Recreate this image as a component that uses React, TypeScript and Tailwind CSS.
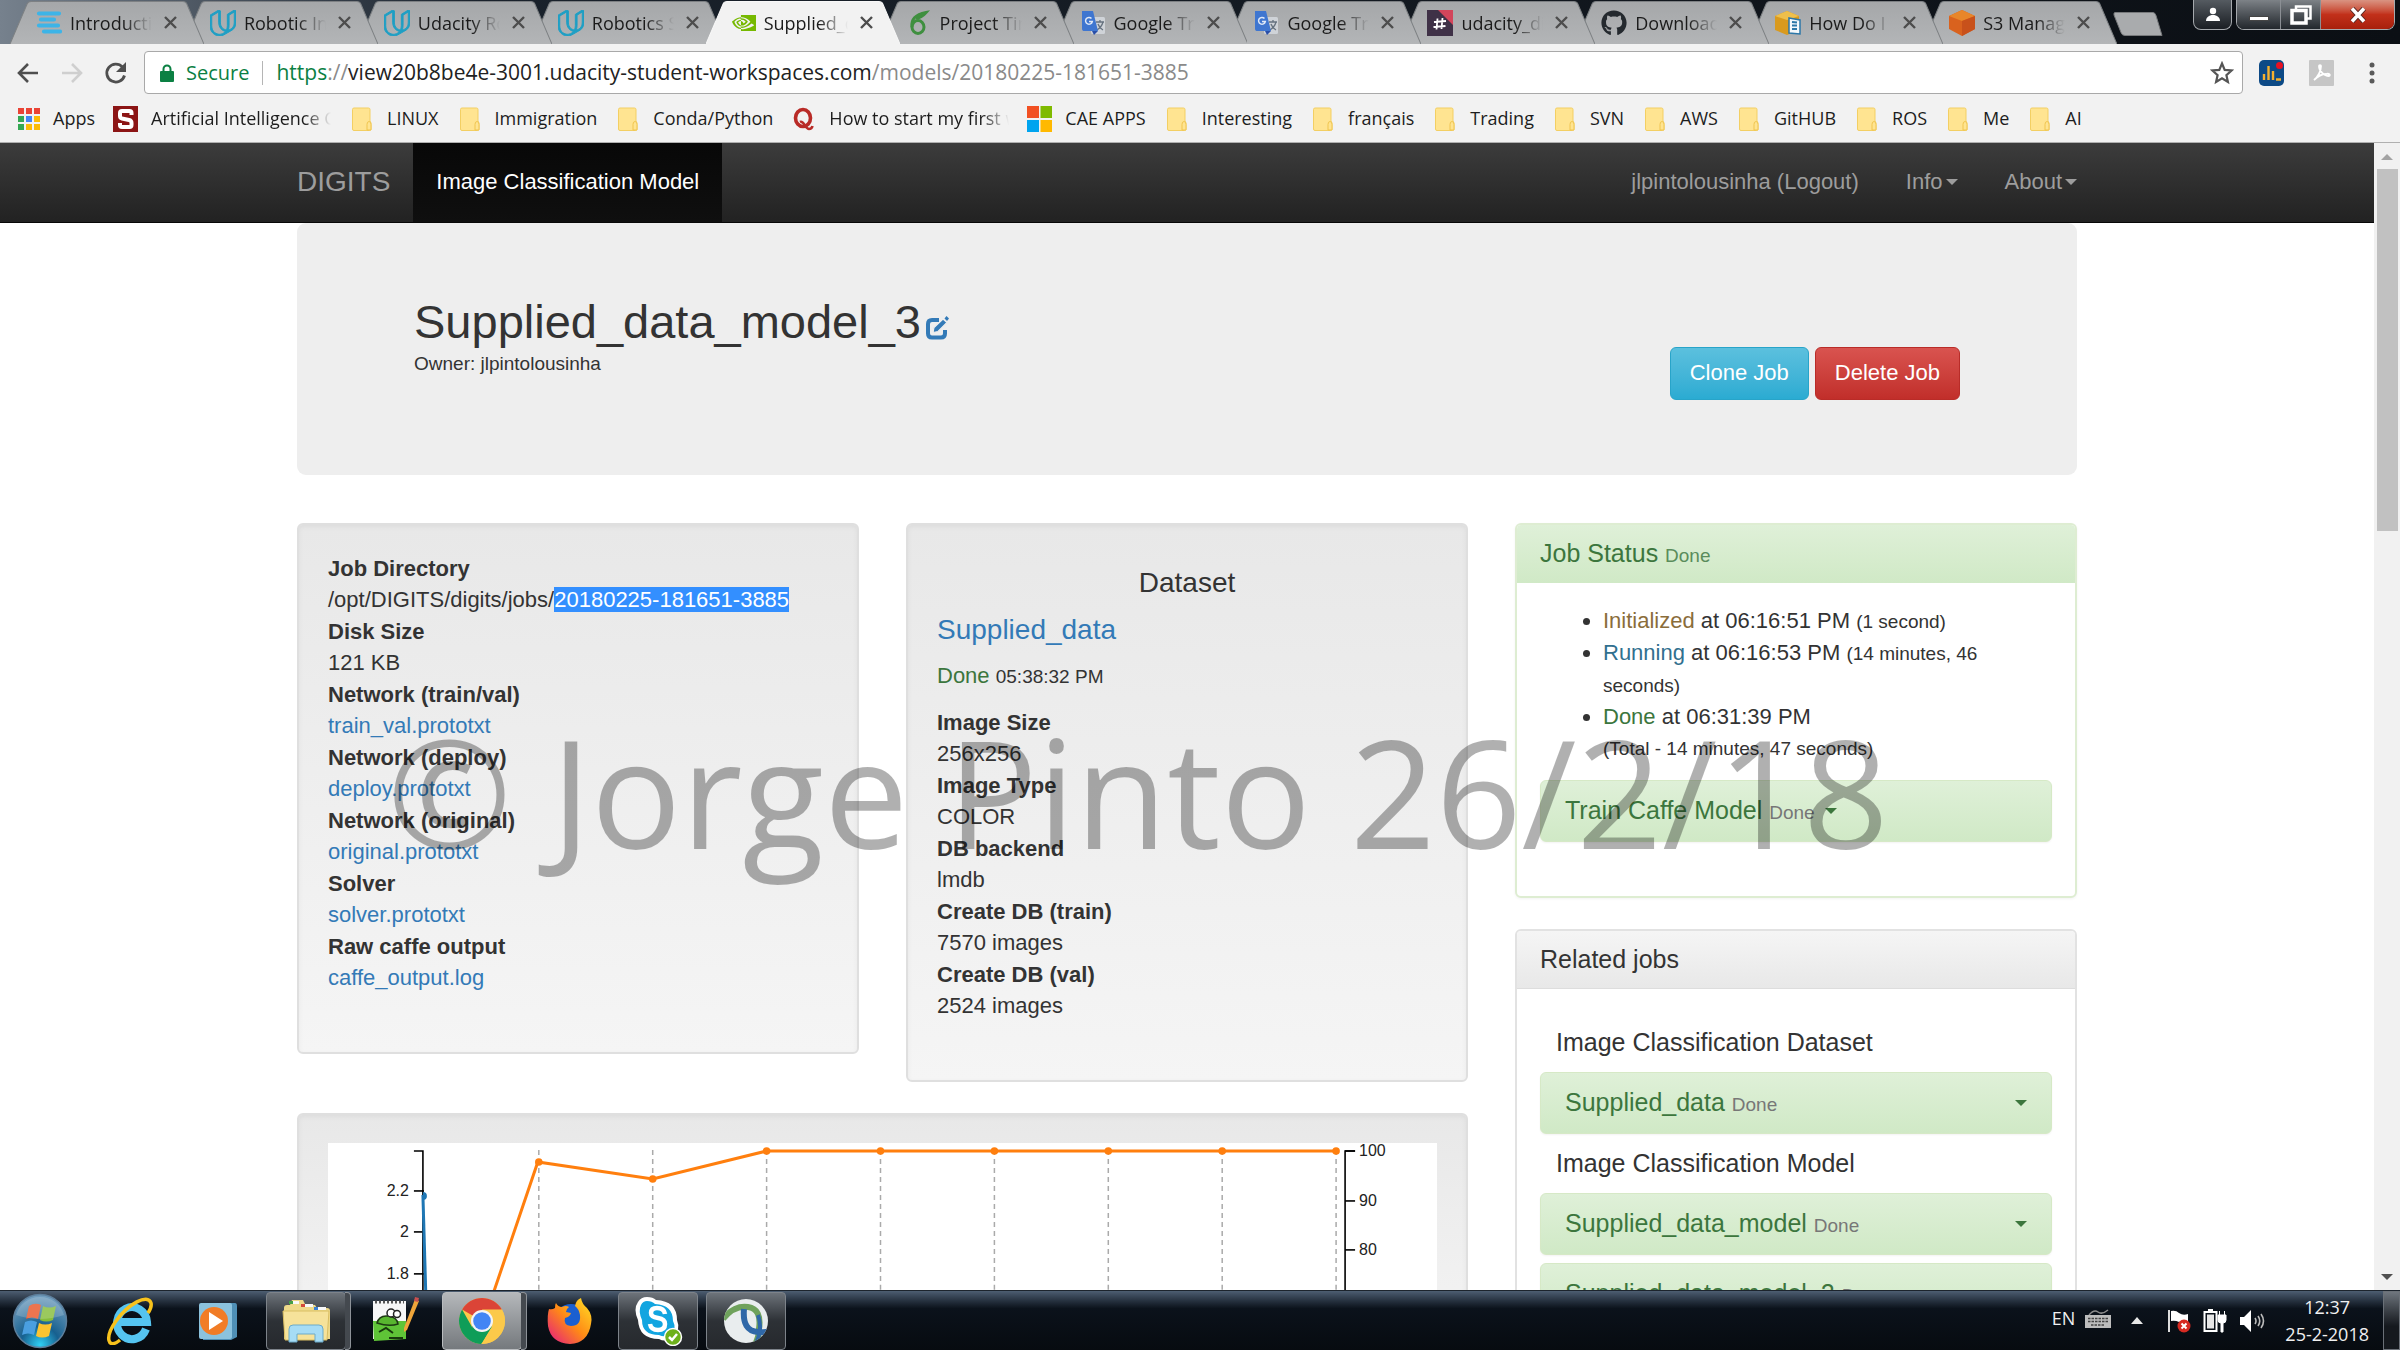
import React from "react";
import { SiUdacity, SiNvidia } from "react-icons/si";
import { FaGithub } from "react-icons/fa";

const UI = "font-['Open_Sans','Noto_Sans',sans-serif]";

function StripesIcon() {
  return (
    <svg viewBox="0 0 26 26" className="size-[26px] shrink-0" aria-hidden="true">
      <g stroke="#3db4e7" strokeWidth="4.200" strokeLinecap="round">
        <path d="M3 3.500h20M5 9.500h13M3 15.500h19M8 21.500h16" />
      </g>
    </svg>
  );
}
function OverleafIcon() {
  return (
    <svg viewBox="0 0 26 26" className="size-[26px] shrink-0" fill="none" stroke="#3f8f3f" aria-hidden="true">
      <ellipse cx="12" cy="17" rx="6" ry="6.5" strokeWidth="3" />
      <path d="M6 17C5 10 8 5 20 2.500C17 6 13 8 10 8" strokeWidth="3" />
    </svg>
  );
}
function TranslateIcon() {
  return (
    <svg viewBox="0 0 26 26" className="size-[26px] shrink-0" aria-hidden="true">
      <rect x="11" y="7" width="14" height="17" rx="1.500" fill="#cfd3d8" />
      <path d="M16 12h8M20 10v2M17 20c3-2 5-4 6-8M18 14c1 3 3 5 5 6" stroke="#66727f" strokeWidth="1.300" fill="none" />
      <path d="M2 1h11l5 20H3.500A2 2 0 0 1 2 19z" fill="#3f76d0" />
      <path d="M12 21h6l-4 4z" fill="#2a4fa8" />
      <path d="M11.500 8.500a3.400 3.400 0 1 0 .8 3H9" stroke="#dfe8f7" strokeWidth="1.500" fill="none" />
    </svg>
  );
}
function SlackIcon() {
  return (
    <svg viewBox="0 0 26 26" className="size-[26px] shrink-0" aria-hidden="true">
      <rect width="26" height="26" fill="#3f3147" />
      <path d="M11 0h15v15z" fill="#d3455b" />
      <path d="M10.500 8.500l-1 11M15.500 8l-1 11M7 12l12-1M6.500 17l12-1" stroke="#fff" strokeWidth="1.800" />
    </svg>
  );
}
function CubeDocIcon() {
  return (
    <svg viewBox="0 0 26 26" className="size-[26px] shrink-0" aria-hidden="true">
      <path d="M12 1l12 5v14l-12 5-12-5V6z" fill="#d99a1e" />
      <path d="M12 1l12 5-12 4L0 6z" fill="#eebf4c" />
      <path d="M14 8l11 2v14l-11-1z" fill="#f4f8fb" stroke="#2c77a8" strokeWidth="1.500" />
      <path d="M17 12l5 .5M17 15.500h5M17 19h5" stroke="#2c77a8" strokeWidth="1.800" />
    </svg>
  );
}
function CubeIcon() {
  return (
    <svg viewBox="0 0 26 26" className="size-[26px] shrink-0" aria-hidden="true">
      <path d="M13 0l13 6v13l-13 7-13-7V6z" fill="#d9621e" />
      <path d="M13 0l13 6-13 5L0 6z" fill="#e8862a" />
      <path d="M13 11l13-5v13l-13 7z" fill="#c8511b" />
    </svg>
  );
}

const udacity = <SiUdacity strokeWidth={0.9} className="size-[26px] shrink-0 text-[#1f9fc4]" aria-hidden="true" />;
const tabs: { title: string; icon: React.ReactNode; z: string; active?: boolean }[] = [
  { title: "Introduction", icon: <StripesIcon />, z: "z-[12]" },
  { title: "Robotic Inference", icon: udacity, z: "z-[11]" },
  { title: "Udacity Robotics", icon: udacity, z: "z-[10]" },
  { title: "Robotics Software", icon: udacity, z: "z-[9]" },
  { title: "Supplied_data", icon: <SiNvidia className="size-[24px] shrink-0 text-[#76b900]" aria-hidden="true" />, z: "z-[20]", active: true },
  { title: "Project Time", icon: <OverleafIcon />, z: "z-[8]" },
  { title: "Google Translate", icon: <TranslateIcon />, z: "z-[7]" },
  { title: "Google Translate", icon: <TranslateIcon />, z: "z-[6]" },
  { title: "udacity_discuss", icon: <SlackIcon />, z: "z-[5]" },
  { title: "Downloads", icon: <FaGithub className="size-[26px] shrink-0 text-[#24292e]" aria-hidden="true" />, z: "z-[4]" },
  { title: "How Do I Create", icon: <CubeDocIcon />, z: "z-[3]" },
  { title: "S3 Management", icon: <CubeIcon />, z: "z-[2]" },
];

function TabStrip() {
  return (
    <div className="relative flex h-[44px] shrink-0 bg-linear-to-r from-[#76818d] via-[#1a222c] via-20% to-[#0b0f14] pl-[10px] pt-px">
      <div className="flex min-w-0 flex-1 pr-4">
        {tabs.map((t, i) => (
          <div key={i} className={`relative -mr-5 flex min-w-0 flex-1 items-center pl-[26px] pr-[27px] ${t.z}`}>
            <svg viewBox="0 0 193 43" preserveAspectRatio="none" className="absolute inset-0 size-full" aria-hidden="true">
              <defs>
                <linearGradient id="tabfill" x1="0" x2="0" y1="0" y2="1">
                  <stop offset="0" stopColor="#a5a7a9" />
                  <stop offset="1" stopColor="#b3b5b7" />
                </linearGradient>
              </defs>
              <path d="M0 43L17 3Q18 0.500 21 0.500H172Q175 0.500 176 3L193 43" fill={t.active ? "#f2f2f2" : "url(#tabfill)"} stroke={t.active ? "#f8f8f8" : "#7d8083"} />
            </svg>
            <button className={`relative flex min-w-0 flex-1 items-center gap-2 text-left text-[18px] leading-[30px] text-[#1b1b1b] ${UI}`}>
              {t.icon}
              <span className="min-w-0 flex-1 overflow-hidden whitespace-nowrap mask-r-from-65%">{t.title}</span>
            </button>
            <button aria-label="Close tab" className="relative ml-3 flex shrink-0 items-center">
              <svg viewBox="0 0 13 13" className="size-[13px]" stroke="#4d4d4d" strokeWidth="2.400" aria-hidden="true">
                <path d="M1 1l11 11M12 1L1 12" />
              </svg>
            </button>
          </div>
        ))}
      </div>
      <button aria-label="New tab" className="mt-[11px] h-6 w-[50px]">
        <svg viewBox="0 0 50 24" className="size-full" aria-hidden="true">
          <path d="M2 .5h38q2 0 3 3l6 20H12q-3 0-4-3L1 3Q.5.5 2 .5z" fill="#a9abad" stroke="#77797b" />
        </svg>
      </button>
      <div className="-mt-px ml-[30px] flex h-[30px] gap-1 pr-[5px]">
        <button aria-label="Profile" className="flex w-[39px] items-center justify-center rounded-b-lg border border-t-0 border-[#a5a9ad] bg-linear-to-b from-[#555b61] to-[#1b1f24]">
          <svg viewBox="0 0 16 16" className="size-4" fill="#fff" aria-hidden="true">
            <circle cx="8" cy="4" r="3.200" />
            <path d="M1 14c0-3.500 3-6 7-6s7 2.500 7 6z" />
          </svg>
        </button>
        <div className="flex overflow-hidden rounded-b-lg border border-t-0 border-[#a5a9ad]">
          <button aria-label="Minimize" className="flex w-11 items-end justify-center border-r border-[#8b8f94] bg-linear-to-b from-[#7d8287] to-[#23282d] pb-2">
            <span className="h-[5px] w-5 border border-[#444] bg-white" />
          </button>
          <button aria-label="Restore" className="flex w-10 items-center justify-center border-r border-[#8b8f94] bg-linear-to-b from-[#7d8287] to-[#23282d]">
            <svg viewBox="0 0 22 20" className="h-5 w-[22px]" fill="none" stroke="#fff" strokeWidth="2.500" aria-hidden="true">
              <path d="M6 4V1.500h14.500v12H17" />
              <rect x="2" y="5.500" width="14" height="12.500" strokeWidth="3.500" />
            </svg>
          </button>
          <button aria-label="Close window" className="flex w-[73px] items-center justify-center bg-linear-to-b from-[#d99382] via-[#c2301a] to-[#a8200c]">
            <svg viewBox="0 0 18 16" className="h-4 w-[18px]" aria-hidden="true">
              <path d="M3 1.500l12 13M15 1.500l-12 13" stroke="#5b2a23" strokeWidth="5.500" />
              <path d="M3 1.500l12 13M15 1.500l-12 13" stroke="#fff" strokeWidth="3.500" />
            </svg>
          </button>
        </div>
      </div>
    </div>
  );
}

function Toolbar() {
  return (
    <div className={`flex shrink-0 items-center bg-[#f2f2f2] pb-[3px] pl-4 pt-[7px] text-[20px] ${UI}`}>
      <div className="flex w-[128px] items-center gap-5">
        <button aria-label="Back">
          <svg viewBox="0 0 24 24" className="size-6" fill="none" stroke="#4f4f4f" strokeWidth="2.600" aria-hidden="true"><path d="M22 12H4M12 3l-9 9 9 9" /></svg>
        </button>
        <button aria-label="Forward">
          <svg viewBox="0 0 24 24" className="size-6" fill="none" stroke="#cfcfcf" strokeWidth="2.600" aria-hidden="true"><path d="M2 12h18M12 3l9 9-9 9" /></svg>
        </button>
        <button aria-label="Reload">
          <svg viewBox="0 0 24 24" className="size-6" fill="none" stroke="#4f4f4f" strokeWidth="2.800" aria-hidden="true">
            <path d="M20.500 14.500A9 9 0 1 1 18.500 6" />
            <path d="M22 1v10H12z" fill="#4f4f4f" stroke="none" />
          </svg>
        </button>
      </div>
      <div className="flex h-[43px] min-w-0 flex-1 items-center rounded border border-[#a9a9a9] bg-white pl-[15px] pr-2">
        <svg viewBox="0 0 14 18" className="h-[18px] w-[14px]" aria-hidden="true">
          <rect y="7" width="14" height="11" rx="1" fill="#0b8043" />
          <path d="M3.500 8V5a3.500 3.500 0 0 1 7 0v3" fill="none" stroke="#0b8043" strokeWidth="2" />
        </svg>
        <span className="ml-3 text-[#0b8043]">Secure</span>
        <span className="mx-[13px] h-6 w-px bg-[#b5b5b5]" />
        <a href="#url" className="flex-1 whitespace-nowrap text-[21px] text-[#8a8a8a]">
          <span className="text-[#0b8043]">https</span>://<span className="text-[#222]">view20b8be4e-3001.udacity-student-workspaces.com</span>/models/20180225-181651-3885
        </a>
        <button aria-label="Bookmark this page">
          <svg viewBox="0 0 24 24" className="size-6" fill="none" stroke="#555" strokeWidth="2.200" aria-hidden="true">
            <path d="M12 2.500l2.700 6.400 6.900.6-5.200 4.600 1.500 6.800L12 17.300 6.100 20.900l1.500-6.800L2.400 9.500l6.900-.6z" />
          </svg>
        </button>
      </div>
      <div className="flex w-[157px] items-center gap-[25px] pl-4">
        <svg viewBox="0 0 25 26" className="h-[26px] w-[25px]" aria-hidden="true">
          <rect width="25" height="26" rx="5" fill="#0d4a86" />
          <path d="M5 20v-6M9.500 20V6M14 20v-9M17 19.500h5" stroke="#f5b02e" strokeWidth="2.400" />
          <circle cx="20.500" cy="5.500" r="3.500" fill="#e81123" />
        </svg>
        <svg viewBox="0 0 25 26" className="h-[26px] w-[25px]" aria-hidden="true">
          <rect width="25" height="26" rx="1" fill="#c6c6c6" />
          <path d="M5 20c4-3 7-9 7-14 0-1-2-1-2 0 0 5 5 10 10 10 2-1 0-3-3-2-4 0-9 3-12 6z" fill="none" stroke="#fff" strokeWidth="1.800" />
        </svg>
        <button aria-label="Menu" className="pl-2.5">
          <svg viewBox="0 0 6 22" className="h-[22px] w-1.5" fill="#5a5a5a" aria-hidden="true">
            <circle cx="3" cy="3" r="2.500" /><circle cx="3" cy="11" r="2.500" /><circle cx="3" cy="19" r="2.500" />
          </svg>
        </button>
      </div>
    </div>
  );
}

function FolderIcon() {
  return (
    <svg viewBox="0 0 25 26" className="h-[26px] w-[25px] shrink-0" aria-hidden="true">
      <path d="M5 2h14.500q1.500 0 1.500 1.500V15l1 2v6q0 1.500-1.500 1.500H5Q3.500 24.500 3.500 23V3.500Q3.500 2 5 2z" fill="#ffe491" stroke="#f3cf63" />
      <path d="M18 24v-5.500q0-3 2-3t2 3V24z" fill="#ffe491" stroke="#f0c54f" />
    </svg>
  );
}
function AppsIcon() {
  const c = ["#ea4335", "#ea4335", "#ea4335", "#34a853", "#4285f4", "#fbbc05", "#34a853", "#fbbc05", "#fbbc05"];
  return (
    <svg viewBox="0 0 22 22" className="size-[22px] shrink-0" aria-hidden="true">
      {c.map((f, i) => <rect key={i} x={(i % 3) * 8} y={Math.floor(i / 3) * 8} width="6" height="6" fill={f} />)}
    </svg>
  );
}
function CardinalIcon() {
  return (
    <svg viewBox="0 0 25 26" className="h-[26px] w-[25px] shrink-0" aria-hidden="true">
      <rect width="25" height="26" fill="#8c1515" />
      <path d="M18.500 9V7q0-2-2-2H9Q7 5 7 7v3q0 2 2 2.500l7 1.500q2.500.5 2.500 3v2q0 2-2 2H9q-2 0-2-2v-2" fill="none" stroke="#fff" strokeWidth="4" />
    </svg>
  );
}
function QuoraIcon() {
  return (
    <svg viewBox="0 0 25 26" className="h-[26px] w-[25px] shrink-0" aria-hidden="true">
      <ellipse cx="12" cy="12" rx="7.500" ry="8.500" fill="none" stroke="#b92b27" strokeWidth="3.600" />
      <path d="M9 16c4-2 5 7 9 7 2 0 3-1 3.500-3" fill="none" stroke="#b92b27" strokeWidth="2.600" />
    </svg>
  );
}
function MicrosoftIcon() {
  return (
    <svg viewBox="0 0 25 26" className="h-[26px] w-[25px] shrink-0" aria-hidden="true">
      <path d="M0 0h12v12H0z" fill="#f25022" /><path d="M13.500 0H25v12H13.500z" fill="#7fba00" />
      <path d="M0 14h12v12H0z" fill="#00a4ef" /><path d="M13.500 14H25v12H13.500z" fill="#ffb900" />
    </svg>
  );
}

const bookmarks: { label: string; icon?: React.ReactNode; fade?: boolean }[] = [
  { label: "Apps", icon: <AppsIcon /> },
  { label: "Artificial Intelligence Class", icon: <CardinalIcon />, fade: true },
  { label: "LINUX" }, { label: "Immigration" }, { label: "Conda/Python" },
  { label: "How to start my first web", icon: <QuoraIcon />, fade: true },
  { label: "CAE APPS", icon: <MicrosoftIcon /> },
  { label: "Interesting" }, { label: "français" }, { label: "Trading" }, { label: "SVN" }, { label: "AWS" },
  { label: "GitHUB" }, { label: "ROS" }, { label: "Me" }, { label: "AI" },
];

function BookmarksBar() {
  return (
    <nav aria-label="Bookmarks" className={`flex h-[46px] shrink-0 items-center gap-[18px] border-b border-[#b0b0b0] bg-[#f2f2f2] pb-0.5 pl-[18px] text-[18px] text-[#1d1d1d] ${UI}`}>
      {bookmarks.map((b) => (
        <a key={b.label} href="#bookmark" className="flex shrink-0 items-center gap-[13px] whitespace-nowrap">
          {b.icon ?? <FolderIcon />}
          {b.fade ? <span className="w-[180px] overflow-hidden mask-r-from-85%">{b.label}</span> : <span>{b.label}</span>}
        </a>
      ))}
    </nav>
  );
}

function Caret({ className = "" }: { className?: string }) {
  return (
    <svg viewBox="0 0 12 6" className={`inline-block h-1.5 w-3 fill-current ${className}`} aria-hidden="true"><path d="M0 0h12L6 6z" /></svg>
  );
}

function Navbar() {
  return (
    <nav className="border-b border-[#080808] bg-linear-to-b from-[#3c3c3c] to-[#222]">
      <div className="mx-auto flex h-[79px] max-w-[1780px] items-stretch text-[#9d9d9d]">
        <a href="#home" className="flex items-center pb-0.5 pr-[23px] text-[28px]">DIGITS</a>
        <a href="#model" className="flex items-center bg-linear-to-b from-[#080808] to-[#0f0f0f] px-[23px] pb-0.5 text-white">Image Classification Model</a>
        <div className="ml-auto flex items-center gap-[47px] pb-0.5">
          <a href="#logout">jlpintolousinha (Logout)</a>
          <button className="flex items-center gap-[3px]">Info<Caret /></button>
          <button className="flex items-center gap-[3px]">About<Caret /></button>
        </div>
      </div>
    </nav>
  );
}

function Well({ children, className = "" }: { children: React.ReactNode; className?: string }) {
  return (
    <div className={`rounded-[6px] border-2 border-[#dfdfdf] bg-linear-to-b from-[#e8e8e8] to-[#f5f5f5] px-[29px] pt-[28px] shadow-[inset_0_2px_5px_rgba(0,0,0,0.05)] ${className}`}>
      {children}
    </div>
  );
}

const jobInfo: { term: string; link?: string; value?: React.ReactNode }[] = [
  { term: "Job Directory", value: <>/opt/DIGITS/digits/jobs/<mark className="bg-[#338fff] text-white">20180225-181651-3885</mark></> },
  { term: "Disk Size", value: "121 KB" },
  { term: "Network (train/val)", link: "train_val.prototxt" },
  { term: "Network (deploy)", link: "deploy.prototxt" },
  { term: "Network (original)", link: "original.prototxt" },
  { term: "Solver", link: "solver.prototxt" },
  { term: "Raw caffe output", link: "caffe_output.log" },
];
const datasetInfo = [
  ["Image Size", "256x256"], ["Image Type", "COLOR"], ["DB backend", "lmdb"],
  ["Create DB (train)", "7570 images"], ["Create DB (val)", "2524 images"],
];

function Chart() {
  const grid = [211, 325, 439, 553, 667, 781, 895, 1009];
  const left: [number, string][] = [[48, "2.2"], [89, "2"], [131, "1.8"]];
  const right: [number, string][] = [[8, "100"], [58, "90"], [107, "80"], [157, "70"]];
  return (
    <svg viewBox="0 0 1110 190" className="block w-full bg-white text-[16px]" role="img" aria-label="Training loss and accuracy">
      {grid.map((x) => <path key={x} d={`M${x} 7V190`} stroke="#aaa" strokeWidth="1.500" strokeDasharray="5 4" />)}
      <path d="M86 8h9V190" fill="none" stroke="#000" strokeWidth="1.600" />
      <path d="M1028 8h-10V190" fill="none" stroke="#000" strokeWidth="1.600" />
      {left.map(([y, t]) => (
        <g key={t}><path d={`M86 ${y}h10`} stroke="#000" strokeWidth="1.600" /><text x="81" y={y + 5} textAnchor="end" fill="#222">{t}</text></g>
      ))}
      {right.map(([y, t]) => (
        <g key={t}><path d={`M1018 ${y}h10`} stroke="#000" strokeWidth="1.600" /><text x="1032" y={y + 5} fill="#222">{t}</text></g>
      ))}
      <path d="M95 52L99 190" stroke="#1f77b4" strokeWidth="3" />
      <path d="M95 49a4 4 0 0 1 0 8z" fill="#1f77b4" />
      <path d="M152 190L210 19L325 36L439 8H1009" fill="none" stroke="#ff7f0e" strokeWidth="3" />
      {grid.map((x, i) => <circle key={x} cx={x} cy={i === 0 ? 19 : i === 1 ? 36 : 8} r="3.800" fill="#ff7f0e" />)}
    </svg>
  );
}

const successBar = "flex h-[62px] w-full items-center rounded-[6px] border border-[#d6e9c6] bg-linear-to-b from-[#dff0d8] to-[#d0e9c6] px-6 text-left text-[25px] text-[#3c763d] shadow-[0_1px_2px_rgba(0,0,0,0.05)]";

function JobBar({ name }: { name: string }) {
  return (
    <button className={successBar}>
      <span>{name} <small className="text-[19px] text-[#777]">Done</small></span>
      <Caret className="ml-auto" />
    </button>
  );
}

function Content() {
  return (
    <main className="mx-auto max-w-[1780px]">
      <header className="flex h-[252px] items-start justify-between rounded-[9px] bg-[#eee] px-[117px] pt-[70px]">
        <div>
          <h1 className="flex items-center text-[47px] leading-[57px]">
            Supplied_data_model_3
            <a href="#edit" aria-label="Edit name" className="ml-1 mt-3 text-[#337ab7]">
              <svg viewBox="0 0 24 24" className="size-6" fill="none" stroke="currentColor" strokeWidth="4" aria-hidden="true">
                <path d="M14 4H7Q3 4 3 8V17.500q0 4 4 4h9q4 0 4-4v-3.500" />
                <path d="M8 16.500l1-5 9-8.500 4 3.500-9 9z" fill="currentColor" stroke="#eee" strokeWidth="1.200" />
                <path d="M19.500 2.500l2-2.500 2.500 2.500-2 2.500z" fill="currentColor" stroke="none" />
              </svg>
            </a>
          </h1>
          <p className="text-[19px] leading-7">Owner: jlpintolousinha</p>
        </div>
        <div className="mt-[54px] flex gap-1.5">
          <button className="h-[53px] rounded-[6px] border border-[#28a4c9] bg-linear-to-b from-[#5bc0de] to-[#2aabd2] px-[19px] pb-0.5 text-white">Clone Job</button>
          <button className="h-[53px] rounded-[6px] border border-[#b92c28] bg-linear-to-b from-[#d9534f] to-[#c12e2a] px-[19px] pb-0.5 text-white">Delete Job</button>
        </div>
      </header>

      <div className="mt-[48px] grid grid-cols-3 items-start gap-x-[47px]">
        <div className="col-span-2 grid grid-cols-2 items-start gap-x-[47px] gap-y-[31px]">
          <Well className="pb-[58px]">
            <dl>
              {jobInfo.map((j) => (
                <React.Fragment key={j.term}>
                  <dt className="font-bold">{j.term}</dt>
                  <dd className="leading-8">{j.link ? <a href="#file" className="text-[#337ab7]">{j.link}</a> : j.value}</dd>
                </React.Fragment>
              ))}
            </dl>
          </Well>
          <Well className="pb-[58px]">
            <h2 className="mt-3.5 text-center text-[28px] leading-[31px]">Dataset</h2>
            <h3 className="mt-4 text-[28px] leading-[31px]"><a href="#dataset" className="text-[#337ab7]">Supplied_data</a></h3>
            <p className="mb-[15px] mt-[15px]"><span className="text-[#3c763d]">Done</span> <small className="text-[19px]">05:38:32 PM</small></p>
            <dl>
              {datasetInfo.map(([k, v]) => (
                <React.Fragment key={k}><dt className="font-bold">{k}</dt><dd className="leading-8">{v}</dd></React.Fragment>
              ))}
            </dl>
          </Well>
          <Well className="col-span-2 pb-[30px]"><Chart /></Well>
        </div>

        <aside className="flex flex-col gap-[31px]">
          <section className="overflow-hidden rounded-[6px] border-2 border-[#deedd2] bg-white shadow-[0_1px_3px_rgba(0,0,0,0.05)]">
            <h2 className="flex h-[58px] items-center bg-linear-to-b from-[#dff0d8] to-[#d0e9c6] px-[23px] text-[25px] text-[#3c763d]">
              <span>Job Status <small className="text-[19px] text-[#5a8c5b]">Done</small></span>
            </h2>
            <div className="px-[23px] pb-[54px] pt-[22px]">
              <ul className="mb-4 list-disc pl-[63px] pr-[60px]">
                <li><span className="text-[#8a6d3b]">Initialized</span> at 06:16:51 PM <small className="text-[19px]">(1 second)</small></li>
                <li><span className="text-[#31708f]">Running</span> at 06:16:53 PM <small className="text-[19px]">(14 minutes, 46 seconds)</small></li>
                <li><span className="text-[#3c763d]">Done</span> at 06:31:39 PM<br /><small className="text-[19px]">(Total - 14 minutes, 47 seconds)</small></li>
              </ul>
              <button className={successBar}>
                <span>Train Caffe Model <small className="text-[19px] text-[#777]">Done</small></span>
                <Caret className="ml-2.5" />
              </button>
            </div>
          </section>

          <section className="overflow-hidden rounded-[6px] border-2 border-[#e2e2e2] bg-white">
            <h2 className="flex h-[58px] items-center border-b border-[#ddd] bg-linear-to-b from-[#f5f5f5] to-[#e8e8e8] px-[23px] text-[25px]">Related jobs</h2>
            <div className="px-[23px] pb-6 pt-[38px]">
              <h3 className="mb-3.5 px-4 text-[25px] leading-[31px]">Image Classification Dataset</h3>
              <JobBar name="Supplied_data" />
              <h3 className="my-3.5 px-4 text-[25px] leading-[31px]">Image Classification Model</h3>
              <div className="flex flex-col gap-2">
                <JobBar name="Supplied_data_model" />
                <JobBar name="Supplied_data_model_2" />
              </div>
            </div>
          </section>
        </aside>
      </div>
    </main>
  );
}

function ScrollBar() {
  return (
    <div className="flex w-[26px] shrink-0 flex-col items-center bg-[#f1f1f1]" aria-hidden="true">
      <svg viewBox="0 0 26 26" className="size-[26px] shrink-0"><path d="M7 17h12l-6-6z" fill="#a3a3a3" /></svg>
      <span className="h-[362px] w-[21px] bg-[#c1c1c1]" />
      <svg viewBox="0 0 26 26" className="mt-auto size-[26px] shrink-0"><path d="M7 10h12l-6 6z" fill="#505050" /></svg>
    </div>
  );
}

function TaskButton({ label, on, bright, stacked, children }: { label: string; on?: boolean; bright?: boolean; stacked?: boolean; children: React.ReactNode }) {
  const look = bright
    ? "border border-[#b9bcbf] bg-linear-to-b from-[#b5b8bb] to-[#75797d]"
    : on ? "border border-[#7d838a] bg-linear-to-b from-[#6d737a] via-[#2d3136] to-[#26292d]" : "border border-transparent";
  return (
    <button aria-label={label} className={`relative flex h-[58px] w-[80px] items-center justify-center rounded ${look}`}>
      {stacked && <span className="absolute -right-1.5 -top-px h-[58px] w-1.5 rounded-r border border-l-0 border-[#8d9298] bg-[#44494f]" />}
      {children}
    </button>
  );
}

function Taskbar() {
  return (
    <footer className={`flex h-[60px] shrink-0 items-center border-t border-[#1c242d] bg-linear-to-b from-[#4d5e72] via-[#0b121b] via-30% to-[#070b10] text-[#f0f0f0] ${UI}`}>
      <button aria-label="Start" className="ml-3 w-[78px]">
        <svg viewBox="0 0 56 56" className="size-[56px]" aria-hidden="true">
          <defs>
            <radialGradient id="orb" cx=".5" cy=".95" r=".9"><stop offset="0" stopColor="#2fd0f5" /><stop offset=".4" stopColor="#17608f" /><stop offset="1" stopColor="#6f9cbd" /></radialGradient>
          </defs>
          <circle cx="28" cy="28" r="26.500" fill="url(#orb)" stroke="#5d7f9c" strokeWidth="1.500" />
          <path d="M17 13q6-4 12-1l-3 14q-6-3-12 0z" fill="#e8572a" />
          <path d="M31 13q6 3 13 0l-3 14q-7 3-13 0z" fill="#86bd3b" />
          <path d="M13 29q6-3 12 0l-3 13q-6-3-12 0z" fill="#4a9fe0" />
          <path d="M27 30q6 3 13 0l-3 13q-7 3-13 0z" fill="#fcc430" />
          <path d="M4 22a25 25 0 0 1 48 0q-24 8-48 0z" fill="#fff" opacity=".18" />
        </svg>
      </button>
      <div className="flex items-center gap-2">
        <TaskButton label="Internet Explorer">
          <svg viewBox="0 0 48 48" className="size-12" fill="none" aria-hidden="true">
            <path d="M40 32A15 16 0 1 1 41 25H13" stroke="#55c4f0" strokeWidth="8" />
            <path d="M14 43C2 53-2 41 10 24S42-4 45 6q1 4-3 10" stroke="#f8c21c" strokeWidth="3.500" />
          </svg>
        </TaskButton>
        <TaskButton label="Media Player">
          <svg viewBox="0 0 42 42" className="size-[42px]" aria-hidden="true">
            <path d="M6 3h32q2 0 2 3v31l-6 3H6z" fill="#4f8fb5" />
            <rect x="2" y="3" width="33" height="36" rx="2" fill="#8bc2dd" />
            <circle cx="17" cy="21" r="14" fill="#f17c26" />
            <path d="M12 12l14 9-14 9z" fill="#fff" />
          </svg>
        </TaskButton>
        <TaskButton label="File Explorer" on stacked>
          <svg viewBox="0 0 50 50" className="size-[50px]" aria-hidden="true">
            <path d="M3 12q0-3 3-3h3l2-5h11l2 4 10 1 2 3h10q3 0 3 3v28H3z" fill="#eed98a" />
            <path d="M8 5h10v3H8zM20 8h12v3H20zM33 11h12v3H33z" fill="#f8f8f8" />
            <path d="M8 5h4v3H8z" fill="#45a045" /><path d="M20 8h4v3h-4z" fill="#d34a3a" /><path d="M33 11h4v3h-4z" fill="#3a80d3" />
            <path d="M2 15h46l-2 29H4z" fill="#f6e29a" stroke="#d9be62" />
            <path d="M8 46V33q0-4 4-4h26q4 0 4 4v13h-8V38H16v8z" fill="#a6dcf5" stroke="#6cabc9" />
          </svg>
        </TaskButton>
        <TaskButton label="Notepad++">
          <svg viewBox="0 0 50 50" className="size-[50px]" aria-hidden="true">
            <path d="M4 5h33v38H4z" fill="#f6f6f6" />
            <path d="M4 25h33v18l-32 2z" fill="#5fc437" />
            <path d="M6 6h29" stroke="#555" strokeWidth="3" strokeDasharray="2 2" />
            <path d="M8 27q2-8 11-7t10 8q-9 3-21-1z" fill="#58b62f" stroke="#1d3a12" strokeWidth="1.500" />
            <circle cx="22" cy="17" r="4" fill="#fff" stroke="#222" strokeWidth="1.500" /><circle cx="28" cy="18" r="3.500" fill="#fff" stroke="#222" strokeWidth="1.500" />
            <path d="M10 36l7-4 7 5M20 42h14" stroke="#173a0c" strokeWidth="2" fill="none" />
            <path d="M46 3l4 2-12 29-3 2 0-4z" fill="#f0a63a" /><path d="M45 5l1-4 4 1-1 4z" fill="#c94f4f" />
          </svg>
        </TaskButton>
        <TaskButton label="Google Chrome" bright stacked>
          <svg viewBox="0 0 48 48" className="size-12" aria-hidden="true">
            <circle cx="24" cy="24" r="23" fill="#fbc94a" />
            <path d="M24 24L4.100 12.500A23 23 0 0 1 43.900 12.500z" fill="#db4437" />
            <path d="M4.100 12.500L14 30l10 5.500L23 47A23 23 0 0 1 4.100 12.500z" fill="#0f9d58" />
            <path d="M24 24l10 5.800L23.500 47 14 29z" fill="#0f9d58" />
            <path d="M34 29.800L23.500 47A23 23 0 0 0 44 12.500H24z" fill="#fbc94a" />
            <circle cx="24" cy="24" r="11" fill="#f4f4f4" /><circle cx="24" cy="24" r="8.800" fill="#4285f4" />
          </svg>
        </TaskButton>
        <TaskButton label="Firefox">
          <svg viewBox="0 0 48 48" className="size-12" aria-hidden="true">
            <defs><linearGradient id="fox" x1="1" y1="0" x2="0" y2="1"><stop offset="0" stopColor="#ffe226" /><stop offset=".5" stopColor="#ff8a16" /><stop offset="1" stopColor="#e31587" /></linearGradient></defs>
            <circle cx="25" cy="24" r="17" fill="#1a5fd0" />
            <path d="M3 12q3 1 6-1 0-4 1-5 2 4 6 4 4-2 7 0-3 2-3 5l5 1q-1 4-6 5-2 7 6 8 10 0 9-11-1-6-5-9 1-6 6-8 1 6 6 10 6 7 4 16-3 19-21 20Q5 46 2 29 1 18 3 12z" fill="url(#fox)" />
          </svg>
        </TaskButton>
        <TaskButton label="Skype" on>
          <svg viewBox="0 0 50 50" className="size-[50px]" aria-hidden="true">
            <path d="M14 1q6 0 9 3 21 1 21 20 4 10-4 17-7 6-14 2Q6 43 5 24 0 13 5 6q3-5 9-5z" fill="#fff" />
            <path d="M14 5q5 0 8 3 18 1 18 17 4 8-2 13-6 4-12 1Q9 39 9 24 5 15 8 9q2-4 6-4z" fill="#12a5e0" />
            <path d="M32 18q-1-6-8-6-6 0-6 5 0 4 7 5t7 6q0 6-7 6-7 0-8-6" fill="none" stroke="#fff" strokeWidth="4.500" />
            <circle cx="40" cy="41" r="8.500" fill="#6eb11c" stroke="#fff" strokeWidth="1.500" />
            <path d="M36 41l3 3 5-6" fill="none" stroke="#fff" strokeWidth="2.500" />
          </svg>
        </TaskButton>
        <TaskButton label="VPN client" on>
          <svg viewBox="0 0 48 48" className="size-12" aria-hidden="true">
            <defs><clipPath id="globe"><circle cx="24" cy="24" r="22" /></clipPath></defs>
            <circle cx="24" cy="24" r="22" fill="#e9edee" />
            <g clipPath="url(#globe)" fill="none">
              <path d="M1 22Q12 8 26 10t11 22q0 8-4 16" stroke="#6fa25c" strokeWidth="6" />
              <path d="M22 12q-2 22 14 23 8 1 12-1" stroke="#2f68a8" strokeWidth="6" />
              <path d="M36 18q5 14-2 28" stroke="#2f68a8" strokeWidth="4" />
            </g>
          </svg>
        </TaskButton>
      </div>
      <div className="ml-auto flex h-full items-center text-[18px]">
        <span className="pb-1">EN</span>
        <svg viewBox="0 0 26 20" className="mb-1 ml-2.5 h-5 w-[26px]" aria-hidden="true">
          <path d="M4 6q5-6 9-3t10-2" fill="none" stroke="#8d8d8d" strokeWidth="1.500" />
          <rect x="0" y="6" width="26" height="13" fill="#bdbdbd" />
          <path d="M3 9.500h20M3 12.500h20M6 16h13" stroke="#444" strokeWidth="1.500" strokeDasharray="2.500 1" />
        </svg>
        <svg viewBox="0 0 12 7" className="ml-5 h-[7px] w-3" aria-hidden="true"><path d="M0 7h12L6 0z" fill="#e8e8e8" /></svg>
        <svg viewBox="0 0 24 24" className="ml-[24px] size-6" aria-hidden="true">
          <path d="M2 1v22" stroke="#ddd" strokeWidth="2" /><path d="M4 2q5-1 8 2 4 3 9 1v9q-5 1-9-1-4-2-8-1z" fill="#fff" />
          <circle cx="17" cy="17" r="6.500" fill="#d62a22" /><path d="M14.500 14.500l5 5M19.500 14.500l-5 5" stroke="#fff" strokeWidth="2" />
        </svg>
        <svg viewBox="0 0 24 24" className="ml-3 size-6" aria-hidden="true">
          <path d="M5 0h5v2H5z" fill="#fff" /><rect x="1.500" y="3" width="12" height="19" fill="none" stroke="#fff" strokeWidth="2" /><rect x="4" y="5.500" width="7" height="14" fill="#e6e6e6" />
          <path d="M15 6h8v5q0 3-3 3v9h-2v-9q-3 0-3-3zM16.500 2v4M21.500 2v4" fill="#fff" stroke="#fff" />
        </svg>
        <svg viewBox="0 0 26 24" className="ml-3 h-6 w-[26px]" aria-hidden="true">
          <path d="M1 8h4l7-7v22l-7-7H1z" fill="#fff" />
          <path d="M16 9q2 3 0 6M19 7q3.500 5 0 10M22 5q5 7 0 14" fill="none" stroke="#bbb" strokeWidth="1.600" />
        </svg>
        <time className="ml-5 flex flex-col text-center leading-[27px]"><span>12:37</span><span>25-2-2018</span></time>
        <button aria-label="Show desktop" className="ml-3.5 h-full w-[17px] border border-[#6a7077] bg-linear-to-b from-[#6f767e] to-[#15191e] to-60%" />
      </div>
    </footer>
  );
}

export default function App() {
  return (
    <div className="relative flex h-screen flex-col overflow-hidden bg-white font-['Liberation_Sans',Arial,sans-serif] text-[22px] leading-[31px] text-[#333]">
      <TabStrip />
      <Toolbar />
      <BookmarksBar />
      <div className="flex min-h-0 flex-1">
        <div className="min-w-0 flex-1 overflow-hidden">
          <Navbar />
          <Content />
        </div>
        <ScrollBar />
      </div>
      <Taskbar />
      <p className="pointer-events-none absolute left-[387px] top-[689px] z-30 whitespace-nowrap font-['Open_Sans','Noto_Sans',sans-serif] text-[150px] leading-[204px] text-black/31">© Jorge Pinto 26/2/18</p>
    </div>
  );
}
